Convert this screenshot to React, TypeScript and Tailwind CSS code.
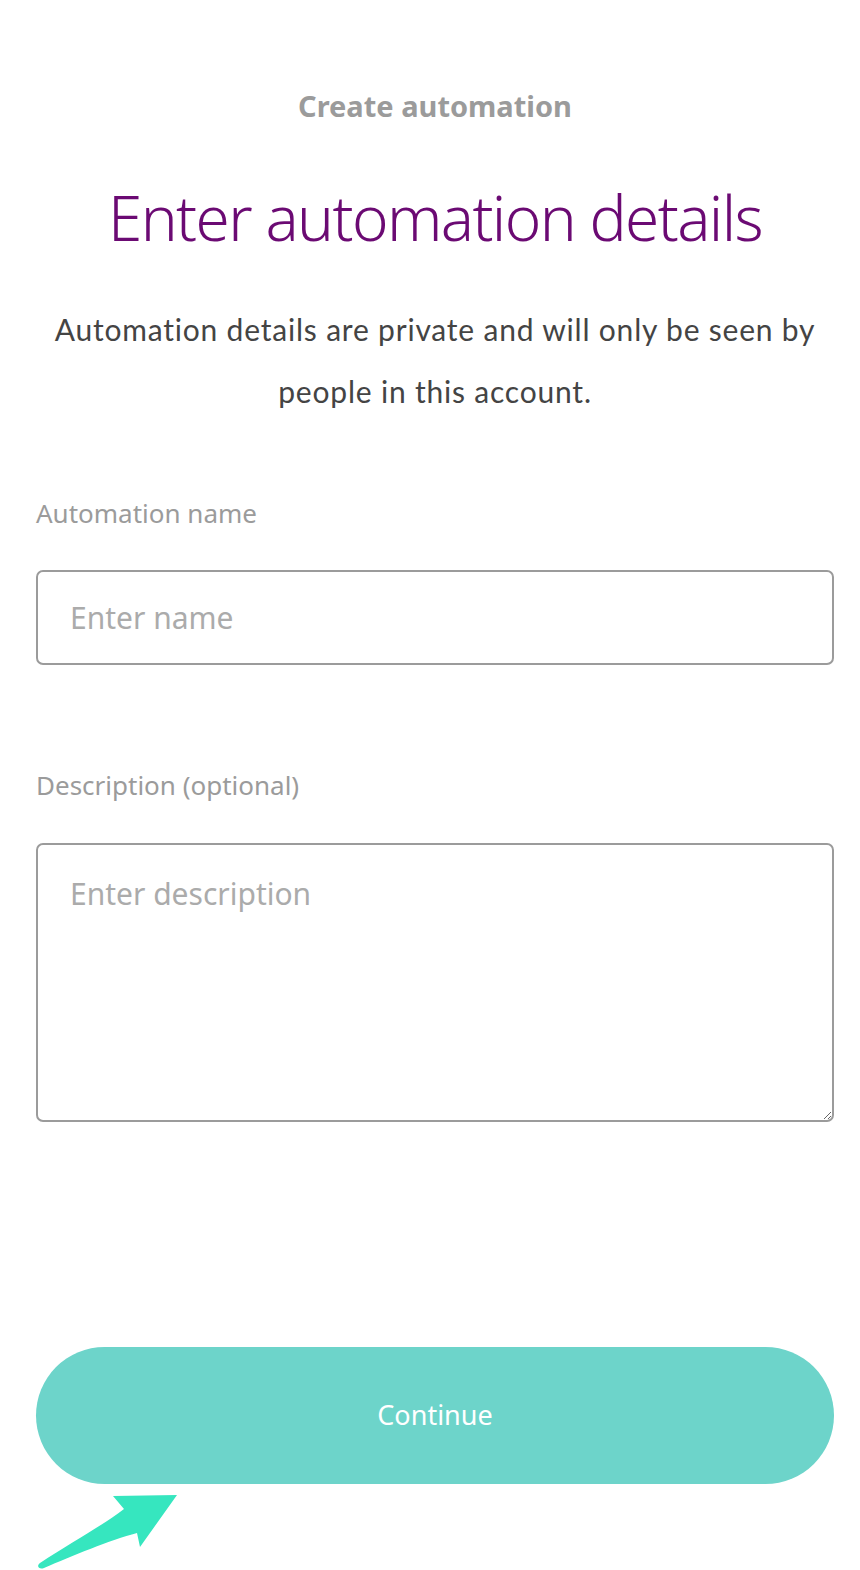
import React from 'react';

const App = (): React.ReactElement => {
  return (
    <div className="relative min-h-[1570px] w-[860px] bg-white font-['Noto_Sans',sans-serif]">
      <div className="pl-9 pr-[26px] pt-[86px]">
        {/* Header */}
        <h2 className="text-center text-[29px] font-bold leading-[40px] text-[#9b9b9b]">
          Create automation
        </h2>
        <h1 className="mt-[55px] text-center text-[62px] font-light leading-[72px] tracking-[-1.6px] text-[#6b0a73]">
          Enter automation details
        </h1>
        <p className="mt-[45px] text-center font-['Lato',sans-serif] text-[30px] leading-[62px] tracking-[0.8px] text-[#444444]">
          Automation details are private and will only be seen by people in
          this account.
        </p>

        {/* Form */}
        <div className="mt-[73px]">
          <label className="block text-[26px] leading-[36px] text-[#9b9b9b]">
            Automation name
          </label>
          <input
            type="text"
            placeholder="Enter name"
            className="mt-[39px] block h-[95px] w-full rounded-[7px] border-2 border-[#9b9b9b] px-[32px] text-[30px] text-[#444444] outline-none placeholder:text-[#ababab]"
          />
        </div>

        <div className="mt-[102px]">
          <label className="block text-[26px] leading-[36px] text-[#9b9b9b]">
            Description (optional)
          </label>
          <textarea
            placeholder="Enter description"
            className="mt-[40px] block h-[279px] w-full rounded-[7px] border-2 border-[#9b9b9b] px-[32px] pt-[29px] text-[30px] leading-[40px] text-[#444444] outline-none placeholder:text-[#ababab]"
          />
        </div>

        <button className="mt-[225px] flex h-[137px] w-full items-center justify-center rounded-full bg-[#6dd4ca] text-[27px] text-white">
          Continue
        </button>
      </div>

      {/* Pointer arrow */}
      <svg
        className="absolute left-0 top-[1488px] h-[82px] w-[190px]"
        viewBox="0 0 190 82"
      >
        <path
          d="M113 8 L177 7 L140 59 L137 45 C110 52 72 68 44 80 C39 82 36 78 40 75 C70 55 102 38 124 21 Z"
          fill="#36e6bf"
        />
      </svg>
    </div>
  );
};

export default App;
